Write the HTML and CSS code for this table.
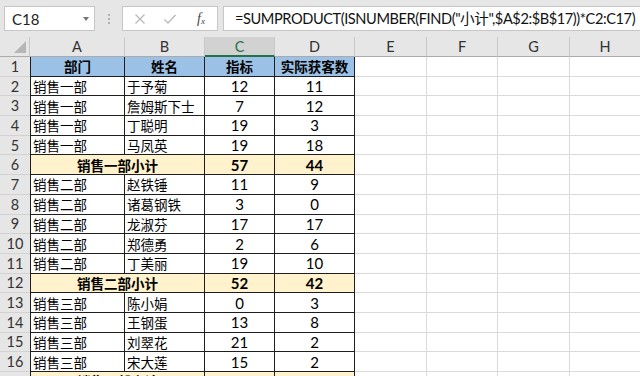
FILE: index.html
```html
<!DOCTYPE html>
<html lang="zh-CN">
<head>
<meta charset="utf-8">
<title>Excel</title>
<link rel="stylesheet" href="styles.css">
</head>
<body>
<div class="app">
  <div class="fbar">
    <div class="namebox"><span class="nb-text">C18</span><span class="nb-arrow"></span></div>
    <div class="sep"><i></i><i></i><i></i></div>
    <div class="fnbox">
      <svg class="ico" width="12" height="12" viewBox="0 0 12 12"><path d="M1.5 1.5 L10.5 10.5 M10.5 1.5 L1.5 10.5" stroke="#b9b9b9" stroke-width="1.3" fill="none"/></svg>
      <svg class="ico" width="14" height="12" viewBox="0 0 14 12"><path d="M1.5 6.5 L5 10 L12.5 2" stroke="#b9b9b9" stroke-width="1.3" fill="none"/></svg>
      <span class="fx">f<sub>x</sub></span>
    </div>
    <div class="formula">=SUMPRODUCT(ISNUMBER(FIND("小计",$A$2:$B$17))*C2:C17)</div>
  </div>
  <div class="sheet">
    <div class="corner"><svg width="14" height="14" viewBox="0 0 14 14"><path d="M13 1 L13 13 L1 13 Z" fill="#b6b6b6"/></svg></div>
    <div class="ch">A</div><div class="ch">B</div><div class="ch sel">C</div><div class="ch">D</div><div class="ch">E</div><div class="ch">F</div><div class="ch">G</div><div class="ch">H</div>

    <div class="rh">1</div><div class="t ta hd">部门</div><div class="t hd">姓名</div><div class="t hd">指标</div><div class="t hd">实际获客数</div><div class="c"></div><div class="c"></div><div class="c"></div><div class="c"></div>

    <div class="rh">2</div><div class="t ta">销售一部</div><div class="t">于予菊</div><div class="t n">12</div><div class="t n">11</div><div class="c"></div><div class="c"></div><div class="c"></div><div class="c"></div>
    <div class="rh">3</div><div class="t ta">销售一部</div><div class="t">詹姆斯下士</div><div class="t n">7</div><div class="t n">12</div><div class="c"></div><div class="c"></div><div class="c"></div><div class="c"></div>
    <div class="rh">4</div><div class="t ta">销售一部</div><div class="t">丁聪明</div><div class="t n">19</div><div class="t n">3</div><div class="c"></div><div class="c"></div><div class="c"></div><div class="c"></div>
    <div class="rh">5</div><div class="t ta">销售一部</div><div class="t">马凤英</div><div class="t n">19</div><div class="t n">18</div><div class="c"></div><div class="c"></div><div class="c"></div><div class="c"></div>
    <div class="rh">6</div><div class="t ta sub merge">销售一部小计</div><div class="t n sub">57</div><div class="t n sub">44</div><div class="c"></div><div class="c"></div><div class="c"></div><div class="c"></div>

    <div class="rh">7</div><div class="t ta">销售二部</div><div class="t">赵铁锤</div><div class="t n">11</div><div class="t n">9</div><div class="c"></div><div class="c"></div><div class="c"></div><div class="c"></div>
    <div class="rh">8</div><div class="t ta">销售二部</div><div class="t">诸葛钢铁</div><div class="t n">3</div><div class="t n">0</div><div class="c"></div><div class="c"></div><div class="c"></div><div class="c"></div>
    <div class="rh">9</div><div class="t ta">销售二部</div><div class="t">龙淑芬</div><div class="t n">17</div><div class="t n">17</div><div class="c"></div><div class="c"></div><div class="c"></div><div class="c"></div>
    <div class="rh">10</div><div class="t ta">销售二部</div><div class="t">郑德勇</div><div class="t n">2</div><div class="t n">6</div><div class="c"></div><div class="c"></div><div class="c"></div><div class="c"></div>
    <div class="rh">11</div><div class="t ta">销售二部</div><div class="t">丁美丽</div><div class="t n">19</div><div class="t n">10</div><div class="c"></div><div class="c"></div><div class="c"></div><div class="c"></div>
    <div class="rh">12</div><div class="t ta sub merge">销售二部小计</div><div class="t n sub">52</div><div class="t n sub">42</div><div class="c"></div><div class="c"></div><div class="c"></div><div class="c"></div>

    <div class="rh">13</div><div class="t ta">销售三部</div><div class="t">陈小娟</div><div class="t n">0</div><div class="t n">3</div><div class="c"></div><div class="c"></div><div class="c"></div><div class="c"></div>
    <div class="rh">14</div><div class="t ta">销售三部</div><div class="t">王钢蛋</div><div class="t n">13</div><div class="t n">8</div><div class="c"></div><div class="c"></div><div class="c"></div><div class="c"></div>
    <div class="rh">15</div><div class="t ta">销售三部</div><div class="t">刘翠花</div><div class="t n">21</div><div class="t n">2</div><div class="c"></div><div class="c"></div><div class="c"></div><div class="c"></div>
    <div class="rh">16</div><div class="t ta">销售三部</div><div class="t">宋大莲</div><div class="t n">15</div><div class="t n">2</div><div class="c"></div><div class="c"></div><div class="c"></div><div class="c"></div>
    <div class="rh">17</div><div class="t ta sub merge">销售三部小计</div><div class="t n sub">49</div><div class="t n sub">15</div><div class="c"></div><div class="c"></div><div class="c"></div><div class="c"></div>
  </div>
</div>
</body>
</html>
```
FILE: styles.css
```css
html, body {
  margin: 0;
  padding: 0;
  background: #ffffff;
  overflow: hidden;
}
.app {
  width: 640px;
  height: 376px;
  overflow: hidden;
  font-family: Lato, "Noto Sans CJK SC", sans-serif;
  color: #000;
}
.fbar {
  height: 37px;
  background: #e6e6e6;
  display: flex;
  align-items: flex-start;
  padding-top: 6px;
  box-sizing: border-box;
}
.namebox {
  margin-left: 4px;
  width: 91px;
  height: 25px;
  box-sizing: border-box;
  background: #fff;
  border: 1px solid #c6c6c6;
  display: flex;
  align-items: center;
  justify-content: space-between;
  padding: 0 5px 0 7px;
}
.nb-text {
  font-size: 15px;
  color: #222;
}
.nb-arrow {
  width: 0;
  height: 0;
  border-left: 3.5px solid transparent;
  border-right: 3.5px solid transparent;
  border-top: 4px solid #777;
}
.sep {
  width: 27px;
  height: 25px;
  display: flex;
  flex-direction: column;
  align-items: center;
  justify-content: center;
  gap: 2px;
}
.sep i {
  display: block;
  width: 2px;
  height: 2px;
  background: #b0b0b0;
}
.fnbox {
  width: 96px;
  height: 25px;
  box-sizing: border-box;
  background: #fff;
  border: 1px solid #c6c6c6;
  display: flex;
  align-items: center;
  padding-left: 11px;
  gap: 17px;
}
.fx {
  font-family: "Liberation Serif", serif;
  font-style: italic;
  font-size: 14px;
  color: #444;
  margin-left: 3px;
}
.fx sub {
  font-size: 9px;
  vertical-align: -1px;
}
.formula {
  margin-left: 5px;
  flex: 1;
  height: 25px;
  box-sizing: border-box;
  background: #fff;
  border: 1px solid #c6c6c6;
  border-right: none;
  padding-left: 11px;
  font-size: 14.6px;
  letter-spacing: -0.42px;
  line-height: 23px;
  white-space: nowrap;
  overflow: hidden;
  color: #111;
}
.sheet {
  display: grid;
  grid-template-columns: 30px 95px 80px 70px 80px 72px 71px 72px 71px;
  grid-template-rows: 20px;
  grid-auto-rows: 19.69px;
}
.corner {
  background: #e6e6e6;
  border-right: 1px solid #c8c8c8;
  border-bottom: 1px solid #ababab;
  box-sizing: border-box;
  display: flex;
  align-items: flex-end;
  justify-content: flex-end;
  padding: 0 2px 2px 0;
}
.corner svg { display: block; }
.ch {
  background: #e6e6e6;
  border-right: 1px solid #c8c8c8;
  border-bottom: 1px solid #ababab;
  box-sizing: border-box;
  display: flex;
  align-items: center;
  justify-content: center;
  font-size: 14.5px;
  color: #333;
}
.ch.sel {
  background: #d2d2d2;
  color: #217346;
  border-bottom: 2px solid #217346;
}
.rh {
  background: #e6e6e6;
  border-bottom: 1px solid #d2d2d2;
  box-sizing: border-box;
  display: flex;
  align-items: center;
  justify-content: center;
  font-size: 14.5px;
  color: #333;
}
.c {
  border-right: 1px solid #dadada;
  border-bottom: 1px solid #dadada;
  box-sizing: border-box;
}
.t {
  border-right: 1px solid #1e1e1e;
  border-bottom: 1px solid #1e1e1e;
  box-sizing: border-box;
  display: flex;
  align-items: center;
  padding-left: 2px;
  font-size: 13.5px;
  white-space: nowrap;
  overflow: hidden;
}
.ta {
  border-left: 1px solid #1e1e1e;
}
.n {
  justify-content: center;
  padding-left: 0;
  font-size: 15px;
}
.hd {
  background: #9bc2e6;
  font-weight: bold;
  justify-content: center;
  padding-left: 0;
}
.sub {
  background: #fff2cc;
  font-weight: bold;
}
.merge {
  grid-column: span 2;
  justify-content: center;
  padding-left: 0;
}
```
